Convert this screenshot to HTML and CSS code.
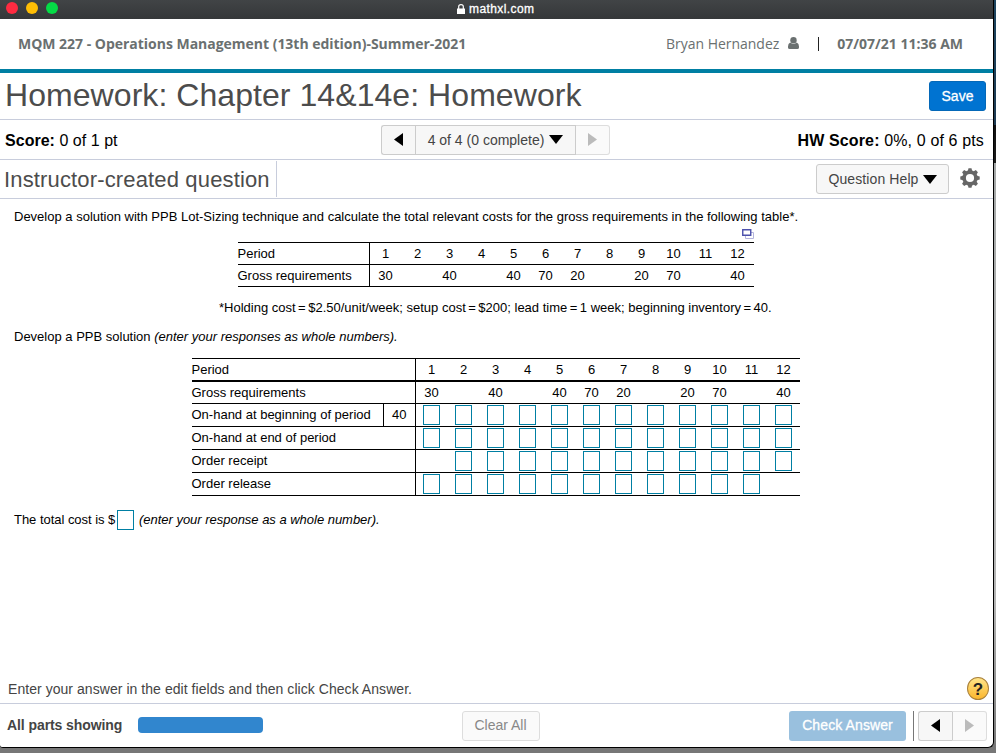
FILE: index.html
```html
<!DOCTYPE html>
<html lang="en" dir="ltr">
  <head>
    <meta charset="utf-8">
    <title>mathxl.com</title>
    <link rel="stylesheet" href="styles.css">
  </head>
  <body>
    <div class="window">
      <div class="titlebar">
        <div class="lights">
          <span class="light red"></span>
          <span class="light yellow"></span>
          <span class="light green"></span>
        </div>
        <svg class="lock" width="8" height="10" viewBox="0 0 8 10"><path d="M0 4.500h8V10H0z" fill="#fff"/><path d="M1.700 5V2.600a2.300 2 0 0 1 4.600 0V5" fill="none" stroke="#fff" stroke-width="1.200"/></svg>
        <span class="site">mathxl.com</span>
      </div>

      <div class="course">
        <span class="course-name">MQM 227 - Operations Management (13th edition)-Summer-2021</span>
        <span class="user">Bryan Hernandez</span>
        <svg class="user-icon" width="11" height="12" viewBox="0 0 11 12"><circle cx="5.500" cy="3.200" r="3.200"/><path d="M2.200 5.600Q0 6.400 0 9.600V10.400Q0 12 1.700 12H9.300Q11 12 11 10.400V9.600Q11 6.400 8.800 5.600Q5.500 8.500 2.200 5.600z"/></svg>
        <span class="bar"></span>
        <span class="date">07/07/21 11:36 AM</span>
      </div>

      <div class="heading">
        <h1>Homework: Chapter 14&amp;14e: Homework</h1>
        <button class="save">Save</button>
      </div>

      <div class="score-row">
        <span class="score"><b>Score:</b> 0 of 1 pt</span>
        <div class="pager">
          <button class="prev"><svg width="9" height="13" viewBox="0 0 9 13"><path d="M9 0v13L0 6.500z"/></svg></button>
          <button class="current"><span>4 of 4 (0 complete)</span><svg width="14" height="9" viewBox="0 0 14 9"><path d="M0 0h14L7 9z"/></svg></button>
          <button class="next"><svg width="9" height="13" viewBox="0 0 9 13"><path d="M0 0v13l9-6.500z"/></svg></button>
        </div>
        <span class="hw-score"><b>HW Score:</b> 0%, 0 of 6 pts</span>
      </div>

      <div class="question-row">
        <h2>Instructor-created question</h2>
        <button class="help"><span>Question Help</span><svg width="14" height="9" viewBox="0 0 14 9"><path d="M0 0h14L7 9z"/></svg></button>
        <svg class="gear" width="20" height="20" viewBox="-10 -10 20 20">
          <circle r="5.900" fill="none" stroke="#666" stroke-width="3.600"/>
          <g fill="#666">
            <path id="tooth" d="M-2.200 -7L-1.500 -9.700H1.500L2.200 -7z"/>
            <use href="#tooth" transform="rotate(45)"/>
            <use href="#tooth" transform="rotate(90)"/>
            <use href="#tooth" transform="rotate(135)"/>
            <use href="#tooth" transform="rotate(180)"/>
            <use href="#tooth" transform="rotate(225)"/>
            <use href="#tooth" transform="rotate(270)"/>
            <use href="#tooth" transform="rotate(315)"/>
          </g>
        </svg>
      </div>

      <div class="content">
        <p class="intro">Develop a solution with PPB Lot-Sizing technique and calculate the total relevant costs for the gross requirements in the following table*.</p>
        <div class="given">
          <svg class="popup" width="12" height="10" viewBox="0 0 12 10"><path d="M3.500 3.500h8v6h-8z" fill="#fff" stroke="#b4b4dc"/><path d="M.75.75h8v5.500H.75z" fill="#fff" stroke="#4c50ac" stroke-width="1.400"/></svg>
          <table>
            <tr><th>Period</th><td>1</td><td>2</td><td>3</td><td>4</td><td>5</td><td>6</td><td>7</td><td>8</td><td>9</td><td>10</td><td>11</td><td>12</td></tr>
            <tr><th>Gross requirements</th><td>30</td><td></td><td>40</td><td></td><td>40</td><td>70</td><td>20</td><td></td><td>20</td><td>70</td><td></td><td>40</td></tr>
          </table>
        </div>
        <p class="note">*Holding cost<i></i>=<i></i>$2.50/unit/week; setup cost<i></i>=<i></i>$200; lead time<i></i>=<i></i>1 week; beginning inventory<i></i>=<i></i>40.</p>
        <p class="task">Develop a PPB solution <em>(enter your responses as whole numbers).</em></p>

        <table class="answers">
          <colgroup><col class="col-label"><col class="col-start"><col span="12"></colgroup>
          <tr class="periods"><th colspan="2">Period</th><td>1</td><td>2</td><td>3</td><td>4</td><td>5</td><td>6</td><td>7</td><td>8</td><td>9</td><td>10</td><td>11</td><td>12</td></tr>
          <tr class="gross"><th colspan="2">Gross requirements</th><td>30</td><td></td><td>40</td><td></td><td>40</td><td>70</td><td>20</td><td></td><td>20</td><td>70</td><td></td><td>40</td></tr>
          <tr>
            <th>On-hand at beginning of period</th><th class="start">40</th>
            <td><input type="text"></td><td><input type="text"></td><td><input type="text"></td><td><input type="text"></td><td><input type="text"></td><td><input type="text"></td>
            <td><input type="text"></td><td><input type="text"></td><td><input type="text"></td><td><input type="text"></td><td><input type="text"></td><td><input type="text"></td>
          </tr>
          <tr>
            <th colspan="2">On-hand at end of period</th>
            <td><input type="text"></td><td><input type="text"></td><td><input type="text"></td><td><input type="text"></td><td><input type="text"></td><td><input type="text"></td>
            <td><input type="text"></td><td><input type="text"></td><td><input type="text"></td><td><input type="text"></td><td><input type="text"></td><td><input type="text"></td>
          </tr>
          <tr>
            <th colspan="2">Order receipt</th>
            <td></td><td><input type="text"></td><td><input type="text"></td><td><input type="text"></td><td><input type="text"></td><td><input type="text"></td>
            <td><input type="text"></td><td><input type="text"></td><td><input type="text"></td><td><input type="text"></td><td><input type="text"></td><td><input type="text"></td>
          </tr>
          <tr>
            <th colspan="2">Order release</th>
            <td><input type="text"></td><td><input type="text"></td><td><input type="text"></td><td><input type="text"></td><td><input type="text"></td><td><input type="text"></td>
            <td><input type="text"></td><td><input type="text"></td><td><input type="text"></td><td><input type="text"></td><td><input type="text"></td><td></td>
          </tr>
        </table>

        <div class="total"><span>The total cost is $</span><input type="text"><em>(enter your response as a whole number).</em></div>
      </div>

      <div class="hint">
        <span>Enter your answer in the edit fields and then click Check Answer.</span>
        <span class="question-mark">?</span>
      </div>

      <div class="footer">
        <b class="parts">All parts showing</b>
        <div class="progress"></div>
        <button class="clear">Clear All</button>
        <button class="check">Check Answer</button>
        <span class="divider"></span>
        <div class="pager">
          <button class="prev"><svg width="9" height="13" viewBox="0 0 9 13"><path d="M9 0v13L0 6.500z"/></svg></button>
          <button class="next"><svg width="9" height="13" viewBox="0 0 9 13"><path d="M0 0v13l9-6.500z"/></svg></button>
        </div>
      </div>
    </div>
  </body>
</html>
```
FILE: styles.css
```css
* {
  box-sizing: border-box;
}

body {
  margin: 0;
  height: 753px;
  overflow: hidden;
  font-family: "Liberation Sans", Arial, sans-serif;
  background: linear-gradient(#1d4560 0, #1d3a52 125px, #111 125px, #1c1c1c 163px, #a5a8a8 163px, #b5b5b5 600px, #777 748px);
}

h1, h2, p {
  margin: 0;
  font-weight: normal;
}

svg {
  display: block;
  flex: none;
}

button {
  padding: 0;
  font-family: inherit;
  border: 1px solid #ccc;
  background: #f7f7f7;
  display: flex;
  align-items: center;
  justify-content: center;
}

.window {
  width: 994px;
  height: 748px;
  display: flex;
  flex-direction: column;
  background: #fff;
  border-right: 1px solid #000;
  border-bottom: 1px solid #000;
  border-radius: 0 0 6px 3px;
  white-space: nowrap;
}

.titlebar {
  height: 19px;
  display: flex;
  align-items: flex-start;
  background: linear-gradient(#414446, #353739);
}

.lights {
  display: flex;
  gap: 8px;
  width: 457px;
  padding: 2px 0 0 6px;
}

.light {
  width: 12px;
  height: 12px;
  border-radius: 50%;
}

.red { background: #ff2b41; }
.yellow { background: #ffbe05; }
.green { background: #05dc46; }

.lock {
  margin-top: 4px;
}

.site {
  margin: 1px 0 0 4px;
  color: #fff;
  font-size: 12px;
  line-height: 16px;
  letter-spacing: 0.4px;
  -webkit-text-stroke: 0.3px #fff;
}

.course {
  height: 54px;
  display: flex;
  align-items: center;
  border-bottom: 4px solid #007fa3;
  padding: 0 30px 2px 18px;
  font-family: "Open Sans", sans-serif;
  font-size: 14px;
  color: #6a7070;
}

.course-name {
  flex: 1;
  font-weight: bold;
  letter-spacing: -0.02px;
}

.user {
  letter-spacing: -0.03px;
}

.user-icon {
  margin: 0 19px 0 9px;
  fill: #6a7070;
}

.bar {
  width: 1px;
  height: 14px;
  margin: 2px 18px 0 0;
  background: #222;
}

.date {
  font-weight: bold;
}

.heading {
  height: 47px;
  display: flex;
  justify-content: space-between;
  padding: 8px 7px 0 5px;
  border-bottom: 1px solid #c8cddc;
}

.heading h1 {
  font-size: 32px;
  line-height: 29px;
  letter-spacing: 0.06px;
  color: #4c4c4c;
}

.save {
  width: 57px;
  height: 30px;
  border: 1px solid #0468b8;
  border-radius: 3px;
  background: #0073d1;
  color: #fff;
  font-size: 14px;
  -webkit-text-stroke: 0.3px #fff;
}

.score-row {
  height: 40px;
  display: flex;
  align-items: center;
  border-bottom: 1px solid #c8cddc;
  padding: 0 9px 0 5px;
  font-size: 16px;
  color: #000;
}

.score {
  width: 376px;
  padding-top: 2px;
  letter-spacing: 0.03px;
}

.hw-score {
  margin-left: auto;
  padding-top: 2px;
  letter-spacing: 0.14px;
}

.pager {
  display: flex;
  height: 30px;
}

.pager button {
  width: 35px;
}

.pager .prev {
  width: 34px;
  border-radius: 3px 0 0 3px;
  border-right: 0;
}

.pager .current {
  width: 161px;
  gap: 5px;
  font-size: 14px;
  color: #444;
}

.pager .next {
  width: 34px;
  border-left: 0;
  border-color: #ddd;
  border-radius: 0 3px 3px 0;
  background: #fafafa;
  fill: #bbb;
}

.footer .pager .next {
  width: 35px;
  border-left: 1px solid #ccc;
}

.question-row {
  height: 39px;
  display: flex;
  align-items: center;
  border-bottom: 1px solid #c8cddc;
  padding-right: 13px;
}

.question-row h2 {
  width: 277px;
  height: 36px;
  padding-left: 4px;
  border-right: 1px solid #c8cddc;
  font-size: 22px;
  line-height: 38px;
  letter-spacing: 0.15px;
  color: #4c4c4c;
}

.help {
  width: 133px;
  height: 30px;
  margin-left: auto;
  gap: 4px;
  border-radius: 3px;
  font-size: 14px;
  color: #444;
}

.help span {
  letter-spacing: 0.1px;
}

.gear {
  margin: -2px 0 0 11px;
}

.content {
  flex: 1;
  padding: 10px 14px 0;
  font-size: 13px;
  line-height: 16px;
}

.given {
  width: 516px;
  margin: 4px 0 0 224px;
}

.popup {
  margin: 0 0 3px auto;
}

table {
  border-collapse: separate;
  border-spacing: 0;
  table-layout: fixed;
  width: 100%;
  border-top: 1px solid #000;
}

th, td {
  height: 22px;
  padding: 0;
  border-bottom: 1px solid #000;
  font-weight: normal;
  text-align: center;
}

td {
  width: 32px;
  padding-right: 1px;
}

th {
  width: 132px;
  text-align: left;
  text-indent: -0.5px;
  border-right: 1px solid #000;
}

.note {
  margin: 13px 0 0 205px;
}

.note i {
  display: inline-block;
  width: 2.5px;
}

.task {
  margin-top: 13px;
}

.answers {
  width: 608px;
  margin: 13px 0 0 178px;
}

.answers .col-label {
  width: 192px;
}

.answers .col-start {
  width: 32px;
}

.answers th,
.answers td {
  height: 23px;
}

.answers .periods th,
.answers .periods td {
  border-bottom-width: 2px;
}

.answers .gross th,
.answers .gross td {
  height: 22px;
}

.answers .start {
  text-align: center;
}

input {
  display: block;
  width: 17px;
  height: 20px;
  margin: 0 auto;
  padding: 0;
  border: 1px solid #007fa3;
  background: #fff;
}

.answers input {
  margin-left: 7px;
}

.total {
  display: flex;
  align-items: center;
  margin-top: 14px;
}

.total span {
  width: 102px;
  letter-spacing: -0.03px;
}

.total input {
  margin: 0 5px 0 1px;
}

.total em {
  letter-spacing: -0.02px;
}

.hint {
  display: flex;
  justify-content: space-between;
  height: 27px;
  padding: 0 4px 0 8px;
  border-bottom: 1px solid #c8cddc;
  font-size: 14px;
  line-height: 24px;
  letter-spacing: 0.05px;
  color: #444;
}

.question-mark {
  width: 22px;
  height: 23px;
  border: 1px solid #a9803a;
  border-radius: 50%;
  background: linear-gradient(#ffe48a, #fbb62c);
  color: #222;
  font-size: 17px;
  font-weight: bold;
  line-height: 23px;
  text-align: center;
}

.footer {
  height: 43px;
  display: flex;
  align-items: center;
  padding: 0 6px 0 7px;
  font-size: 14px;
  color: #444;
}

.parts {
  width: 131px;
  padding-bottom: 2px;
  letter-spacing: -0.08px;
}

.progress {
  width: 125px;
  height: 16px;
  margin-bottom: 1px;
  border-radius: 4px;
  background: #3186ce;
}

.clear {
  width: 78px;
  height: 30px;
  margin-left: 199px;
  padding: 0 1px 1px 0;
  border-color: #ddd;
  border-radius: 3px;
  background: #fafafa;
  font-size: 14px;
  color: #888;
}

.check {
  width: 117px;
  height: 30px;
  margin-left: auto;
  padding-bottom: 1px;
  border: 0;
  border-radius: 3px;
  background: #99c0de;
  color: #fff;
  font-size: 14px;
  letter-spacing: 0.1px;
  -webkit-text-stroke: 0.3px #fff;
}

.divider {
  width: 1px;
  height: 30px;
  margin: 0 4px 0 7px;
  background: #777;
}
```
